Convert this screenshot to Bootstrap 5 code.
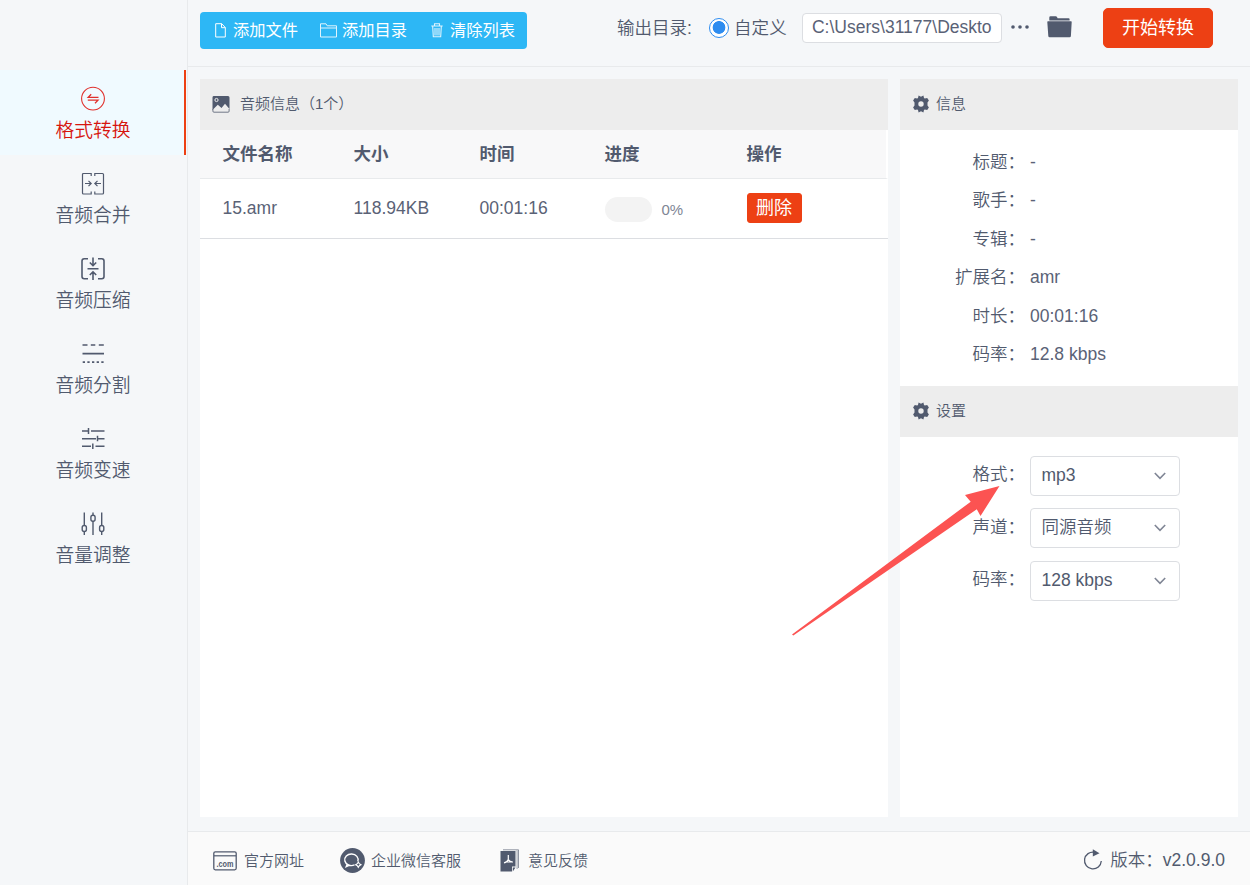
<!DOCTYPE html>
<html lang="zh-CN">
<head>
  <meta charset="UTF-8" />
  <meta name="viewport" content="width=device-width, initial-scale=1" />
  <title>音频转换器</title>
  <link
    href="https://cdn.jsdelivr.net/npm/bootstrap@5.3.0/dist/css/bootstrap.min.css"
    rel="stylesheet"
  />
  <style>
    :root {
      --ink: #515a6e;
      --accent: #ed4014;
    }
    body {
      font-family: "Liberation Sans", "Noto Sans CJK SC", sans-serif;
      font-size: 17.5px;
      font-weight: 350;
      line-height: 26px;
      color: var(--ink);
      background: #f5f7f9;
      overflow: hidden;
    }
    svg { display: block; flex-shrink: 0; }

    /* menú lateral */
    .sidebar {
      width: 188px;
      padding-top: 70px;
      border-right: 1px solid #e8eaec;
      font-size: 18.75px;
    }
    .side-item {
      height: 85px;
      width: 186px;
      padding: 16px 0 0 2px;
      border-right: 2px solid transparent;
      color: var(--ink);
      text-decoration: none;
    }
    .side-item span { margin-top: 5px; line-height: 28px; }
    .side-item.active {
      background: #f0faff;
      border-color: var(--accent);
      color: #d7150e;
    }

    /* barra superior */
    .topbar { height: 67px; border-bottom: 1px solid #e8eaec; padding-left: 12px; }
    .tool-group {
      margin-top: 12px;
      width: 327px;
      height: 37px;
      padding-left: 15px;
      border-radius: 4px;
      background: #2db7f5;
      color: #fff;
      font-size: 16.25px;
      font-weight: 400;
    }
    .tool-group button { all: unset; display: flex; align-items: center; height: 36px; }
    .tool-group .tool-dir { margin-left: 22px; }
    .tool-group .tool-clear { margin-left: 24px; }
    .tool-text { margin-left: 5px; }
    .tool-add .tool-text { margin-left: 7px; }
    .tool-clear .tool-text { margin-left: 7px; }
    .out-label { margin: 15px 0 0 90px; }
    .form-check-input.dest {
      width: 20px;
      height: 20px;
      margin: 18px 5px 0 17px;
      border: 1px solid #2d8cf0;
      background: #fff radial-gradient(circle at 50% 47%, #2d8cf0 6px, transparent 6.7px);
    }
    .dest-text { margin-top: 15px; letter-spacing: .2px; }
    .path-box {
      width: 200px;
      height: 30px;
      margin: 13px 0 0 15px;
      padding: 0 9px 2px;
      border: 1px solid #dcdee2;
      border-radius: 4px;
      font-size: 17.5px;
      font-weight: 400;
      color: #5a6276;
    }
    .dots { margin: 24px 0 0 8px; }
    .folder { margin: 16px 0 0 17px; }
    .btn-accent {
      --bs-btn-color: #fff;
      --bs-btn-bg: #ed4014;
      --bs-btn-border-color: #ed4014;
      --bs-btn-hover-color: #fff;
      --bs-btn-hover-bg: #d93a12;
      padding: 0;
      border-radius: 4px;
      font-size: 18px;
    }
    .btn-start { width: 110px; height: 40px; margin: 8px 0 0 30px; border-radius: 5px; }
    .btn-del { width: 55px; height: 30px; line-height: 28px; border-radius: 3px; }

    /* paneles */
    .workspace { padding: 12px 12px 14px; height: 764px; gap: 12px; }
    .panel-head {
      height: 51px;
      padding-left: 12px;
      padding-bottom: 1px;
      background: #ededed;
      font-size: 15px;
    }
    .head-text { margin-left: 6px; }
    .head-text.list-title { margin-left: 10px; }
    .info-panel { width: 338px; }
    .file-table { table-layout: fixed; width: 688px; margin: 0; border-collapse: separate; border-spacing: 0; }
    .file-table th, .file-table td { padding: 0 0 0 22.5px; vertical-align: middle; text-align: left; }
    .file-table thead tr { background: #f8f8f9; }
    .file-table thead th { height: 49px; border-bottom: 1px solid #e8eaec; }
    .file-table thead th:last-child { border-right: 2px solid #fff; }
    .file-table td { height: 60px; padding-bottom: 1px; font-weight: 400; color: #5a6276; border-bottom: 1px solid #dcdee2; }
    .progress-cell { padding-top: 3px; }
    .progress.pill { width: 47px; height: 25px; border-radius: 13px; background: #f3f3f3; }
    .pct { font-size: 15px; color: #808695; margin-left: 10px; }

    .props { height: 256px; padding-top: 13px; }
    .props > div { height: 38.4px; line-height: 38.4px; }
    .prop-name { width: 125px; text-align: right; margin-right: 5px; }
    .prop-value { font-weight: 400; color: #5a6276; }
    .opts { padding-top: 19px; }
    .opts > div { height: 52.4px; }
    .opts .prop-name { padding-top: 5.4px; }
    .form-select.opt {
      --bs-form-select-bg-img: url("data:image/svg+xml,%3csvg xmlns='http://www.w3.org/2000/svg' viewBox='0 0 12 8'%3e%3cpath fill='none' stroke='%23808695' stroke-width='1.6' d='M.8 1l5.2 5.4L11.2 1'/%3e%3c/svg%3e");
      width: 150px;
      height: 40px;
      padding: 0 30px 2px 10.5px;
      background-position: right 13px center;
      background-size: 12px 8px;
      border: 1px solid #dcdee2;
      border-radius: 4px;
      font-size: 17.5px;
      font-weight: inherit;
      color: var(--ink);
    }

    /* pie */
    .statusbar {
      height: 54px;
      border-top: 1px solid #e8eaec;
      background: #fafafa;
      padding: 4px 25px 0 25px;
      font-size: 15px;
    }
    .foot-text { margin-left: 7px; }
    .foot-chat { margin-left: 36px; }
    .foot-chat + .foot-text { margin-left: 6px; }
    .foot-doc { margin-left: 39px; }
    .foot-doc + .foot-text { margin-left: 9px; }
    .version { font-size: 17.5px; gap: 7px; padding-bottom: 1px; }

    .pointer-arrow { left: 785px; top: 480px; pointer-events: none; }
  </style>
</head>
<body>
  <div class="d-flex vh-100">
    <nav class="sidebar flex-shrink-0 d-flex flex-column">
      <a class="side-item active d-flex flex-column align-items-center" href="#">
        <svg width="26" height="26" viewBox="0 0 26 26" fill="none" stroke="#e0302c" stroke-width="1.1"><circle cx="13" cy="12.6" r="11.4"/><path d="M18.500 11.300H8.200L11.200 8.200M7.800 14.200h10.200L15 17.300" stroke-width="1.3"/></svg>
        <span>格式转换</span>
      </a>
      <a class="side-item d-flex flex-column align-items-center" href="#">
        <svg width="26" height="26" viewBox="0 0 26 26" fill="none" stroke="currentColor" stroke-width="1.2"><path d="M11.200 5V2.500H3.500q-1 0-1 1V22q0 1 1 1h7.700v-2.500M14.800 5V2.500h7.700q1 0 1 1V22q0 1-1 1h-7.700v-2.500M5 12.500h6.200M8.500 9.800l2.700 2.700-2.700 2.700M21 12.500h-6.200M17.500 9.800l-2.700 2.700 2.700 2.700"/></svg>
        <span>音频合并</span>
      </a>
      <a class="side-item d-flex flex-column align-items-center" href="#">
        <svg width="26" height="26" viewBox="0 0 26 26" fill="none" stroke="currentColor" stroke-width="1.600"><path d="M8 2.700H4.200Q2 2.700 2 5v15.500q0 2.200 2.200 2.200H8M18 2.700h3.800Q24 2.700 24 5v15.500q0 2.200-2.200 2.200H18M7.500 12.700h11M13 1.500v8M9.800 6.500L13 9.700l3.200-3.200M13 24v-8M9.800 19L13 15.800l3.200 3.200"/></svg>
        <span>音频压缩</span>
      </a>
      <a class="side-item d-flex flex-column align-items-center" href="#">
        <svg width="26" height="26" viewBox="0 0 26 26" fill="none" stroke="currentColor" stroke-width="1.700"><path d="M2.500 4h5M10.800 4h4.500M18.800 4h5M2.500 12.700h21.500"/><path d="M2.700 21.200H24" stroke-dasharray="2.300 2.350"/></svg>
        <span>音频分割</span>
      </a>
      <a class="side-item d-flex flex-column align-items-center" href="#">
        <svg width="26" height="26" viewBox="0 0 26 26" fill="none" stroke="currentColor" stroke-width="1.500"><path d="M2 5h6M8.500 2v6M11 5h13.500M2 12.700h14M17.500 9.800v5.500M18 12.700h6.500M2 20.300h9M12.800 17.500V23M15.500 20.300h9"/></svg>
        <span>音频变速</span>
      </a>
      <a class="side-item d-flex flex-column align-items-center" href="#">
        <svg width="26" height="26" viewBox="0 0 26 26" fill="none" stroke="currentColor" stroke-width="1.400"><path d="M4.300 1.500v13M4.300 20.500v3.500M13 1.500v2.700M13 10v14M21.700 1.500v13M21.700 20.500v3.500"/><rect x="2.200" y="14.500" width="4.200" height="6" rx="2"/><rect x="10.900" y="4.300" width="4.200" height="6" rx="2"/><rect x="19.600" y="14.500" width="4.200" height="6" rx="2"/></svg>
        <span>音量调整</span>
      </a>
    </nav>

    <div class="flex-grow-1 d-flex flex-column">
      <header class="topbar d-flex align-items-start">
        <div class="tool-group d-flex">
          <button type="button" class="tool-add">
            <svg width="11" height="15" viewBox="0 0 11 15" fill="none" stroke="#fff" stroke-width="1"><path d="M.700.700h6L10.300 4.500v9.500H.700zM6.500.700v4h3.800"/></svg><span class="tool-text">添加文件</span>
          </button>
          <button type="button" class="tool-dir">
            <svg width="17" height="15" viewBox="0 0 17 15" fill="none" stroke="#fff" stroke-width="1" opacity=".85"><path d="M.500 14V.800h5.500l1.200 2h9.300V14zM.500 5h16"/></svg><span class="tool-text">添加目录</span>
          </button>
          <button type="button" class="tool-clear">
            <svg width="12" height="15" viewBox="0 0 12 15" fill="none" stroke="#fff" stroke-width="1.100" opacity=".85"><path d="M.300 3h11.400M3.500 2.800V.800h5v2M1.700 3.500l.6 10.300h7.400l.6-10.300M4 5v7.500M6 5v7.500M8 5v7.500"/></svg><span class="tool-text">清除列表</span>
          </button>
        </div>
        <div class="out-label">输出目录:</div>
        <input class="form-check-input dest" type="radio" id="custom" checked />
        <label for="custom" class="dest-text">自定义</label>
        <input class="form-control path-box" type="text" value="C:\Users\31177\Deskto" aria-label="输出目录" />
        <svg class="dots" width="20" height="6" viewBox="0 0 20 6" fill="#515a6e"><circle cx="3" cy="3" r="1.800"/><circle cx="10" cy="3" r="1.800"/><circle cx="17" cy="3" r="1.800"/></svg>
        <svg class="folder" width="26" height="22" viewBox="0 0 26 22" fill="#515a6e"><path d="M2.300 4.500V1.500Q2.300.300 3.500.300h5.300q.8 0 1.200.700l.6 1.200h11q1 0 1 1v1.300zM1 5.300h23q.800 0 .700.800l-.8 14q-.1 1.200-1.300 1.200H2.600q-1.200 0-1.300-1.200L.300 6.100q-.1-.8.700-.8z"/></svg>
        <button class="btn btn-accent btn-start" type="button">开始转换</button>
      </header>

      <main class="workspace d-flex">
        <section class="flex-grow-1 bg-white">
          <div class="panel-head d-flex align-items-center">
            <svg width="18" height="17" viewBox="0 0 18 17"><path fill="#515a6e" d="M1.500 0h14.500q1.500 0 1.500 1.500v11.500L13 7.800 9.500 12 5.800 8.800.500 14V1.500Q.500 0 1.500 0z"/><circle cx="4.500" cy="4" r="1.600" fill="none" stroke="#ededed"/><path fill="none" stroke="#515a6e" stroke-width=".8" d="M.900 13v2.200q0 1 1 1h14.200q1 0 1-1V13"/></svg>
            <span class="head-text list-title">音频信息（1个）</span>
          </div>
          <table class="file-table">
            <colgroup>
              <col width="131" /><col width="126" /><col width="125" /><col width="142" /><col width="164" />
            </colgroup>
            <thead>
              <tr><th>文件名称</th><th>大小</th><th>时间</th><th>进度</th><th>操作</th></tr>
            </thead>
            <tbody>
              <tr>
                <td>15.amr</td>
                <td>118.94KB</td>
                <td>00:01:16</td>
                <td>
                  <div class="progress-cell d-flex align-items-center">
                    <div class="progress pill"><div class="progress-bar" style="width: 0%"></div></div>
                    <span class="pct">0%</span>
                  </div>
                </td>
                <td><button class="btn btn-accent btn-del d-block" type="button">删除</button></td>
              </tr>
            </tbody>
          </table>
        </section>

        <aside class="info-panel flex-shrink-0 bg-white">
          <div class="panel-head d-flex align-items-center">
            <svg width="18" height="18" viewBox="0 0 18 18"><path id="gear" fill="#515a6e" fill-rule="evenodd" d="M6 3L6.600.600 9 1.700l2.400-1.100L12 3l.8.500 2.400-.6 1.700 2.700L15.500 7.400v3.200l1.400 1.800-1.700 2.700-2.400-.6-.8.500-.6 2.400L9 16.300l-2.400 1.100L6 15l-.8-.500-2.400.6-1.700-2.700 1.400-1.800V7.400L1.100 5.600l1.700-2.700 2.400.6zM9 6.300a2.700 2.700 0 1 0 0 5.400 2.700 2.700 0 0 0 0-5.400z"/></svg>
            <span class="head-text">信息</span>
          </div>
          <div class="props">
            <div class="d-flex"><div class="prop-name">标题：</div><div class="prop-value">-</div></div>
            <div class="d-flex"><div class="prop-name">歌手：</div><div class="prop-value">-</div></div>
            <div class="d-flex"><div class="prop-name">专辑：</div><div class="prop-value">-</div></div>
            <div class="d-flex"><div class="prop-name">扩展名：</div><div class="prop-value">amr</div></div>
            <div class="d-flex"><div class="prop-name">时长：</div><div class="prop-value">00:01:16</div></div>
            <div class="d-flex"><div class="prop-name">码率：</div><div class="prop-value">12.8 kbps</div></div>
          </div>
          <div class="panel-head d-flex align-items-center">
            <svg width="18" height="18" viewBox="0 0 18 18"><use href="#gear"/></svg>
            <span class="head-text">设置</span>
          </div>
          <div class="opts">
            <div class="d-flex"><div class="prop-name">格式：</div><select class="form-select opt"><option>mp3</option></select></div>
            <div class="d-flex"><div class="prop-name">声道：</div><select class="form-select opt"><option>同源音频</option></select></div>
            <div class="d-flex"><div class="prop-name">码率：</div><select class="form-select opt"><option>128 kbps</option></select></div>
          </div>
        </aside>
      </main>

      <footer class="statusbar d-flex align-items-center">
        <svg width="24" height="20" viewBox="0 0 24 20"><rect x=".8" y=".8" width="22.400" height="18" rx="1.500" fill="none" stroke="#515a6e" stroke-width="1.300"/><path d="M1 4.800h22" stroke="#515a6e" stroke-width="1.200"/><text x="3.500" y="16" font-size="9" font-weight="700" textLength="17" lengthAdjust="spacingAndGlyphs" fill="#515a6e">.com</text></svg>
        <span class="foot-text">官方网址</span>
        <svg class="foot-chat" width="25" height="25" viewBox="0 0 25 25"><circle cx="12.500" cy="12.500" r="12.400" fill="#515a6e"/><path d="M17.800 13.500a6.700 5.800 0 1 0-3.300 3.400M7.500 15.500L6.200 18.700l3.500-1.500" fill="none" stroke="#fff" stroke-width="1.400"/><path d="M18.300 14l1 1.700 1.700 1-1.700 1-1 1.700-1-1.700-1.700-1 1.700-1z" fill="none" stroke="#fff" stroke-width="1.100"/></svg>
        <span class="foot-text">企业微信客服</span>
        <svg class="foot-doc" width="19" height="23" viewBox="0 0 19 23"><path d="M3 .800h15.500V19" fill="none" stroke="#515a6e" stroke-width=".9" opacity=".7"/><path d="M16.500 1.500h1.200V20h-1.200z" fill="#515a6e" opacity=".45"/><path d="M.500 2h15v15.500h-3.500v5H.500zM12.800 22.500v-4h2.700z" fill="#515a6e"/><path d="M8.300 6v4.500Q7.500 13 4 13.800M8.300 10.500q1.200 2.200 4.500 2.700M5.500 13h5.500" fill="none" stroke="#fff" stroke-width="1.200"/></svg>
        <span class="foot-text">意见反馈</span>
        <a class="version ms-auto d-flex align-items-center text-reset text-decoration-none" href="#">
          <svg width="20" height="22" viewBox="0 0 20 22"><path d="M11.500 3.200A8.400 8.400 0 1 0 18.300 12" fill="none" stroke="#515a6e" stroke-width="1.300"/><path d="M9.800.300l6.700 4-6.700 3.200z" fill="#515a6e"/></svg>
          <span>版本：<span class="fw-normal">v2.0.9.0</span></span>
        </a>
      </footer>
    </div>
  </div>

  <!-- flecha que señala el formato -->
  <svg class="pointer-arrow position-absolute" width="220" height="160" viewBox="785 480 220 160">
    <path fill="#fc5352" d="M792 634.500L970.700 501.700 965 495l34.500-9-19 30-3.700-6.700L793.300 635.500z"/>
  </svg>
</body>
</html>
